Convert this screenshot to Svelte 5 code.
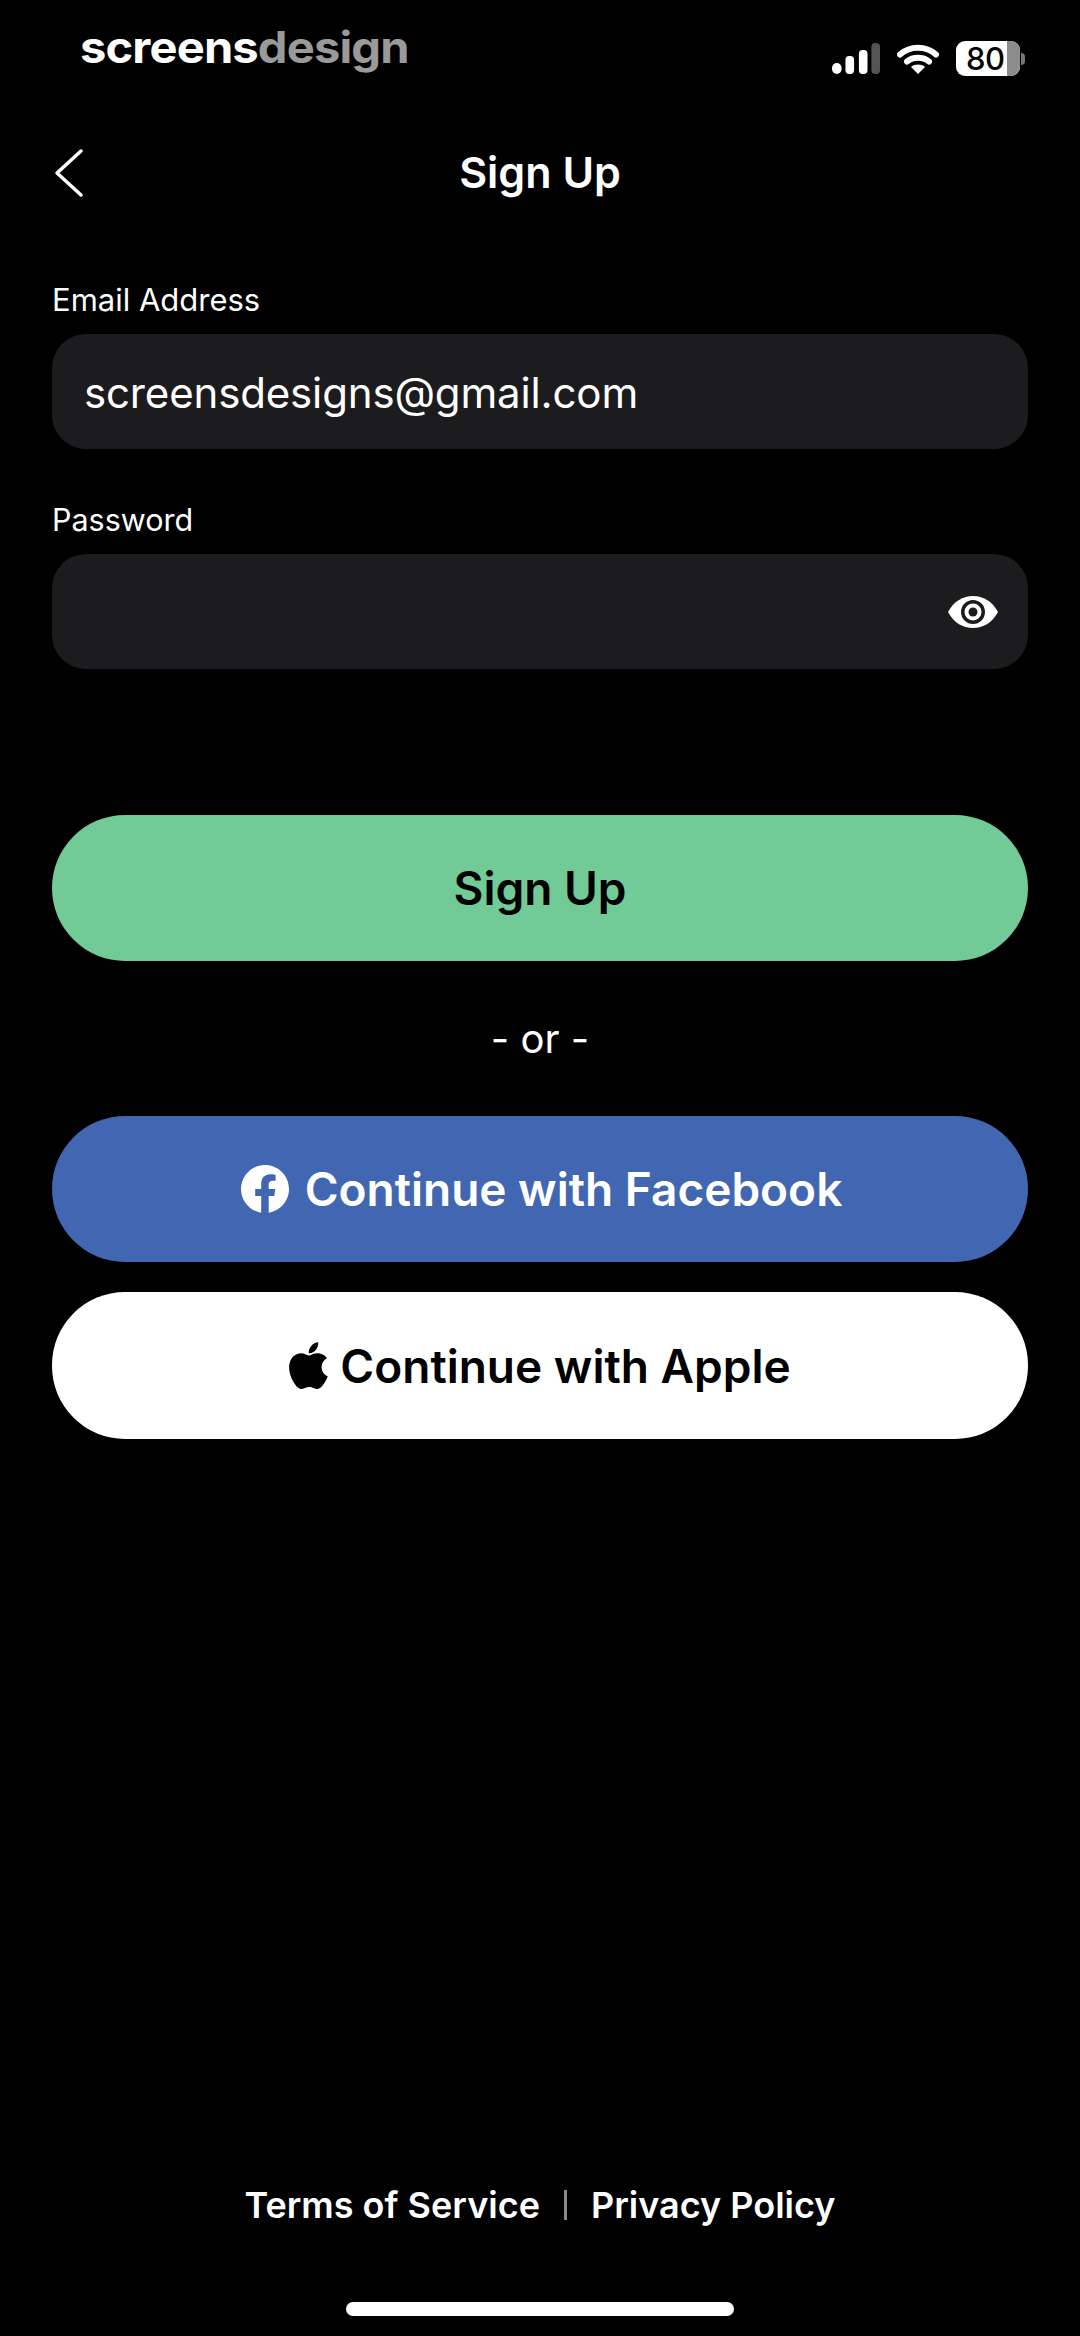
<script>
  const email = 'screensdesigns@gmail.com';
</script>

<div class="screen">
  <div class="status">
    <div class="logo"><span>screens</span><span class="dim">design</span></div>
    <div class="indicators">
      <svg class="signal" width="48" height="32" viewBox="0 0 50 32" preserveAspectRatio="none" aria-hidden="true">
        <rect x="0" y="20" width="10" height="11" rx="5" fill="#fff"/>
        <rect x="14" y="13" width="9" height="18" rx="4" fill="#fff"/>
        <rect x="28" y="7" width="9" height="24" rx="4" fill="#fff"/>
        <rect x="41" y="0" width="9" height="31" rx="4" fill="#555"/>
      </svg>
      <svg class="wifi" width="42" height="32" viewBox="0 0 42 32" aria-hidden="true">
        <path d="M3 11.500C13 2.500 29 2.500 39 11.500M10 18.500C16 13.500 26 13.500 32 18.500" fill="none" stroke="#fff" stroke-width="6" stroke-linecap="round"/>
        <path d="M21 31L14 24C18 20.800 24 20.800 28 24Z" fill="#fff"/>
      </svg>
      <div class="battery"><span class="pct">80</span><i class="rest"></i></div>
      <i class="nub"></i>
    </div>
  </div>

  <header class="nav">
    <svg class="back" width="30" height="50" viewBox="0 0 30 50" aria-hidden="true">
      <path d="M27 3L3 25L27 47" fill="none" stroke="#fff" stroke-width="3.500" stroke-linecap="round" stroke-linejoin="round"/>
    </svg>
    <h1>Sign Up</h1>
  </header>

  <main class="form">
    <div class="label first">Email Address</div>
    <div class="field mail">{email}</div>
    <div class="label second">Password</div>
    <div class="field pass">
      <svg width="50" height="34" viewBox="0 0 50 34" aria-hidden="true">
        <path d="M0 17C6 6 15 1 25 1S44 6 50 17C44 28 35 33 25 33S6 28 0 17Z" fill="#fff"/>
        <circle cx="25" cy="17" r="12" fill="#1c1c1e"/>
        <circle cx="25" cy="17" r="8.500" fill="#fff"/>
        <circle cx="25" cy="17" r="4.500" fill="#1c1c1e"/>
      </svg>
    </div>
    <button class="btn green">Sign Up</button>
    <div class="or">- or -</div>
    <button class="btn blue">
      <svg width="48" height="48" viewBox="0 0 48 48" aria-hidden="true">
        <path d="M48 24C48 10.700 37.300 0 24 0S0 10.700 0 24C0 36 8.800 45.900 20.200 47.700V31H14.200V24H20.200V18.700C20.200 12.700 23.800 9.300 29.300 9.300C31.900 9.300 34.600 9.800 34.600 9.800V15.700H31.600C28.600 15.700 27.700 17.500 27.700 19.400V24H34.300L33.300 31H27.700V47.700C39.200 45.900 48 36 48 24Z" fill="#fff"/>
      </svg>
      Continue with Facebook
    </button>
    <button class="btn white">
      <svg width="39" height="48" viewBox="3 2.500 33.500 41" aria-hidden="true">
        <path d="M31 24.300C31 18.900 35.400 16.400 35.600 16.200C33.100 12.600 29.300 12.100 27.900 12C24.700 11.700 21.600 13.900 19.900 13.900C18.300 13.900 15.800 12.100 13.200 12.100C9.700 12.200 6.500 14.100 4.800 17.200C1.200 23.400 3.900 32.600 7.400 37.600C9.100 40.100 11.100 42.800 13.800 42.700C16.400 42.600 17.400 41 20.500 41C23.600 41 24.500 42.700 27.200 42.700C30 42.600 31.800 40.200 33.400 37.700C35.400 34.800 36.200 32 36.300 31.900C36.200 31.800 31 29.900 31 24.300Z" fill="#000"/>
        <path d="M26 9.200C27.400 7.500 28.400 5.100 28.100 2.700C26.100 2.800 23.600 4.100 22.100 5.800C20.800 7.300 19.700 9.800 20 12C22.300 12.200 24.600 10.900 26 9.200Z" fill="#000"/>
      </svg>
      Continue with Apple
    </button>
  </main>

  <footer class="foot">
    <div class="links"><span>Terms of Service</span><i class="sep"></i><span>Privacy Policy</span></div>
    <div class="home"></div>
  </footer>
</div>

<style>
  :global(body) { margin: 0; background: #000; }
  .screen {
    width: 1080px; height: 2336px; background: #000; color: #fff;
    display: flex; flex-direction: column; overflow: hidden;
    font-family: Inter, "Liberation Sans", sans-serif;
  }
  .status { height: 110px; padding: 0 55px 0 80px; display: flex; justify-content: space-between; align-items: flex-start; }
  .logo { margin-top: 17px; font-size: 44px; line-height: 60px; font-weight: 700; letter-spacing: -0.8px; transform: scaleX(1.07); transform-origin: left center; }
  .dim { color: #9a9a9a; }
  .indicators { display: flex; align-items: center; margin-top: 41px; }
  .signal { margin-right: 17px; }
  .wifi { margin-right: 17px; }
  .battery { width: 64px; height: 35px; border-radius: 9px; background: #fff; position: relative; overflow: hidden; color: #000; display: flex; }
  .pct { font-size: 31px; font-weight: 500; line-height: 35px; padding-left: 10px; letter-spacing: -0.5px; }
  .rest { position: absolute; right: 0; top: 0; bottom: 0; width: 13px; background: #8c8c8c; }
  .nub { width: 4px; height: 12px; background: #777; border-radius: 0 4px 4px 0; margin-left: 1px; }
  .nav { height: 66px; position: relative; display: flex; align-items: center; justify-content: center; }
  .back { position: absolute; left: 54px; top: 38px; }
  h1 { margin: 0; font-size: 43px; font-weight: 600; line-height: 66px; position: relative; top: 29px; letter-spacing: 0; }
  .form { display: flex; flex-direction: column; padding: 0 52px; margin-top: 94px; }
  .label { font-size: 31px; line-height: 40px; color: #fff; letter-spacing: 0; }
  .first { margin-top: 10px; }
  .field { margin-top: 14px; height: 115px; border-radius: 34px; background: #1c1c1e; display: flex; align-items: center; padding: 0 32px; font-size: 42px; letter-spacing: -0.15px; box-sizing: border-box; }
  .mail { padding-top: 2px; }
  .second { margin-top: 51px; font-size: 30.5px; }
  .pass { justify-content: flex-end; padding-right: 30px; }
  .btn {
    height: 146px; border: 0; border-radius: 73px; padding: 0;
    font: 600 46px Inter, sans-serif; display: flex; align-items: center; justify-content: center;
  }
  .green { margin-top: 146px; background: #72cb96; color: #000; }
  .or { height: 155px; display: flex; align-items: center; justify-content: center; font-size: 40px; }
  .blue { background: #4267b2; color: #fff; gap: 16px; padding-left: 3px; }
  .white { margin-top: 30px; height: 147px; background: #fff; color: #000; gap: 12px; }
  .foot { margin-top: auto; display: flex; flex-direction: column; align-items: center; }
  .links { display: flex; align-items: center; font-size: 36px; font-weight: 600; line-height: 50px; }
  .sep { width: 3px; height: 30px; background: #8a8a8a; margin: 0 24px; }
  .home { width: 388px; height: 14px; border-radius: 7px; background: #fff; margin-top: 72px; margin-bottom: 20px; }
</style>
